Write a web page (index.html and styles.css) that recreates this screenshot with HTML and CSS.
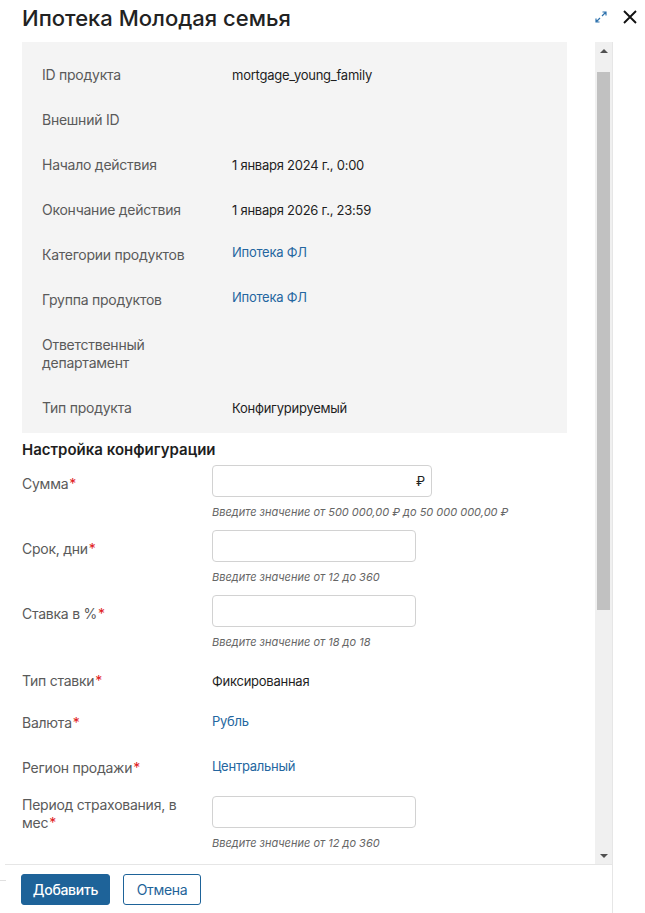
FILE: index.html
```html
<!DOCTYPE html>
<html lang="ru">
<head>
<meta charset="utf-8">
<title>Ипотека Молодая семья</title>
<link rel="stylesheet" href="styles.css">
</head>
<body>
<header class="top">
  <h1 class="title">Ипотека Молодая семья</h1>
  <div class="actions">
    <svg class="icon-expand" width="12" height="12" viewBox="0 0 12 12" aria-hidden="true">
      <path d="M7 5 L11 1 M7.5 1 H11 V4.5 M5 7 L1 11 M1 7.5 V11 H4.5" fill="none" stroke="#2e72ad" stroke-width="1.2"/>
    </svg>
    <svg class="icon-close" width="14" height="14" viewBox="0 0 14 14" aria-hidden="true">
      <path d="M1 1 L13 13 M13 1 L1 13" fill="none" stroke="#111" stroke-width="1.9"/>
    </svg>
  </div>
</header>
<div class="dialog">
  <div class="scroll-wrap">
    <div class="content">
      <section class="info">
        <div class="info-row"><div class="k">ID продукта</div><div class="v">mortgage_young_family</div></div>
        <div class="info-row"><div class="k">Внешний ID</div><div class="v"></div></div>
        <div class="info-row"><div class="k">Начало действия</div><div class="v">1 января 2024 г., 0:00</div></div>
        <div class="info-row"><div class="k">Окончание действия</div><div class="v">1 января 2026 г., 23:59</div></div>
        <div class="info-row"><div class="k">Категории продуктов</div><div class="v"><a class="link">Ипотека ФЛ</a></div></div>
        <div class="info-row"><div class="k">Группа продуктов</div><div class="v"><a class="link">Ипотека ФЛ</a></div></div>
        <div class="info-row"><div class="k">Ответственный департамент</div><div class="v"></div></div>
        <div class="info-row"><div class="k">Тип продукта</div><div class="v">Конфигурируемый</div></div>
      </section>
      <h2 class="section-title">Настройка конфигурации</h2>
      <div class="form">
        <div class="f-row">
          <div class="f-label">Сумма<span class="req">*</span></div>
          <div class="f-field">
            <div class="input wide"><span class="suffix">₽</span></div>
            <div class="hint">Введите значение от 500 000,00 ₽ до 50 000 000,00 ₽</div>
          </div>
        </div>
        <div class="f-row">
          <div class="f-label">Срок, дни<span class="req">*</span></div>
          <div class="f-field">
            <div class="input"></div>
            <div class="hint">Введите значение от 12 до 360</div>
          </div>
        </div>
        <div class="f-row">
          <div class="f-label">Ставка в %<span class="req">*</span></div>
          <div class="f-field">
            <div class="input"></div>
            <div class="hint">Введите значение от 18 до 18</div>
          </div>
        </div>
        <div class="s-row">
          <div class="f-label">Тип ставки<span class="req">*</span></div>
          <div class="s-value">Фиксированная</div>
        </div>
        <div class="s-row">
          <div class="f-label">Валюта<span class="req">*</span></div>
          <div class="s-value"><a class="link">Рубль</a></div>
        </div>
        <div class="s-row s-row-gap">
          <div class="f-label">Регион продажи<span class="req">*</span></div>
          <div class="s-value"><a class="link">Центральный</a></div>
        </div>
        <div class="f-row f-row-multi">
          <div class="f-label">Период страхования, в мес<span class="req">*</span></div>
          <div class="f-field">
            <div class="input"></div>
            <div class="hint">Введите значение от 12 до 360</div>
          </div>
        </div>
      </div>
    </div>
    <div class="scrollbar">
      <div class="sb-up"></div>
      <div class="sb-track"><div class="sb-thumb"></div></div>
      <div class="sb-down"></div>
    </div>
  </div>
  <footer class="footer">
    <button class="btn btn-primary">Добавить</button>
    <button class="btn btn-outline">Отмена</button>
  </footer>
</div>
<div class="behind-line"></div>
</body>
</html>
```
FILE: styles.css
```css
* { box-sizing: border-box; }
html, body { margin: 0; padding: 0; }
body {
  width: 645px;
  height: 913px;
  overflow: hidden;
  background: #fff;
  font-family: Inter, "Noto Sans", sans-serif;
  font-size: 14px;
  color: #222;
  position: relative;
}
.top {
  height: 42px;
  display: flex;
  align-items: center;
  justify-content: space-between;
  padding: 0 8px 6px 22px;
}
.title {
  margin: 0;
  font-size: 22px;
  font-weight: 500;
  color: #222;
}
.actions {
  display: flex;
  align-items: center;
  gap: 16px;
  padding-bottom: 2px;
}
.icon-close { margin-top: -1px; }
.dialog {
  width: 613px;
  height: 871px;
  border-right: 1px solid #e6e6e6;
  display: flex;
  flex-direction: column;
}
.scroll-wrap {
  height: 822px;
  display: flex;
  overflow: hidden;
}
.content {
  width: 595px;
  padding: 0 28px 0 22px;
}
.info {
  background: #f4f4f4;
  padding: 10px 20px 3px 20px;
}
.info-row {
  display: grid;
  grid-template-columns: 190px 1fr;
  padding: 13.5px 0;
  line-height: 18px;
}
.k {
  color: #5a5a5a;
  letter-spacing: -0.25px;
  padding-right: 40px;
}
.v {
  color: #1e1e1e;
  font-size: 13px;
  letter-spacing: -0.25px;
}
.link {
  color: #2466a0;
  display: block;
  margin-top: -3px;
}
.section-title {
  margin: 8px 0 0 0;
  font-size: 15px;
  font-weight: 600;
  line-height: 18px;
  color: #1e1e1e;
}
.form { padding-top: 6px; }
.f-row {
  display: grid;
  grid-template-columns: 190px 1fr;
  margin-bottom: 11px;
}
.f-label {
  color: #5a5a5a;
  line-height: 18px;
  letter-spacing: -0.25px;
  padding-top: 10px;
  padding-right: 28px;
}
.f-row-multi { margin-top: 8px; }
.f-row-multi .f-label { padding-top: 0; }
.req {
  color: #e02020;
  letter-spacing: 0;
  margin-left: 1px;
}
.input {
  width: 204px;
  height: 32px;
  border: 1px solid #d2d2d2;
  border-radius: 4px;
  background: #fff;
  display: flex;
  align-items: center;
  justify-content: flex-end;
  padding-right: 6px;
}
.input.wide { width: 220px; }
.suffix { font-size: 13px; color: #222; }
.hint {
  margin-top: 8px;
  font-size: 11px;
  line-height: 14px;
  font-style: italic;
  color: #666;
}
.s-row {
  display: grid;
  grid-template-columns: 190px 1fr;
  padding: 12px 0;
}
.s-row .f-label { padding-top: 0; }
.s-row-gap { padding-top: 15px; padding-bottom: 11px; }
.s-value {
  line-height: 18px;
  color: #1e1e1e;
  font-size: 13px;
  letter-spacing: -0.25px;
}
.s-value .link { margin-top: -2px; }
.scrollbar {
  width: 17px;
  height: 822px;
  background: #f0f0f0;
  display: flex;
  flex-direction: column;
  align-items: center;
}
.sb-up, .sb-down {
  height: 17px;
  width: 17px;
  display: flex;
  align-items: center;
  justify-content: center;
  flex-shrink: 0;
}
.sb-up::before {
  content: "";
  border-left: 4px solid transparent;
  border-right: 4px solid transparent;
  border-bottom: 4px solid #505050;
}
.sb-down::before {
  content: "";
  border-left: 4px solid transparent;
  border-right: 4px solid transparent;
  border-top: 4px solid #505050;
}
.sb-track {
  flex: 1;
  width: 13px;
  padding-top: 13px;
}
.sb-thumb {
  height: 538px;
  background: #c1c1c1;
}
.footer {
  margin-left: 5px;
  border-top: 1px solid #e6e6e6;
  padding: 9px 16px 0 16px;
  display: flex;
  gap: 13px;
  flex: 1;
}
.btn {
  height: 31px;
  font-family: Inter, "Noto Sans", sans-serif;
  font-size: 14px;
  border-radius: 3px;
  cursor: pointer;
  letter-spacing: -0.3px;
}
.btn-primary {
  width: 89px;
  background: #1e6399;
  border: 1px solid #1e6399;
  color: #fff;
  font-weight: 500;
}
.btn-outline {
  width: 78px;
  background: #fff;
  border: 1px solid #1e6399;
  color: #1e6399;
  font-weight: 400;
}
.behind-line {
  position: absolute;
  left: 0;
  top: 880px;
  width: 6px;
  height: 1px;
  background: #e0e0e0;
}
```
